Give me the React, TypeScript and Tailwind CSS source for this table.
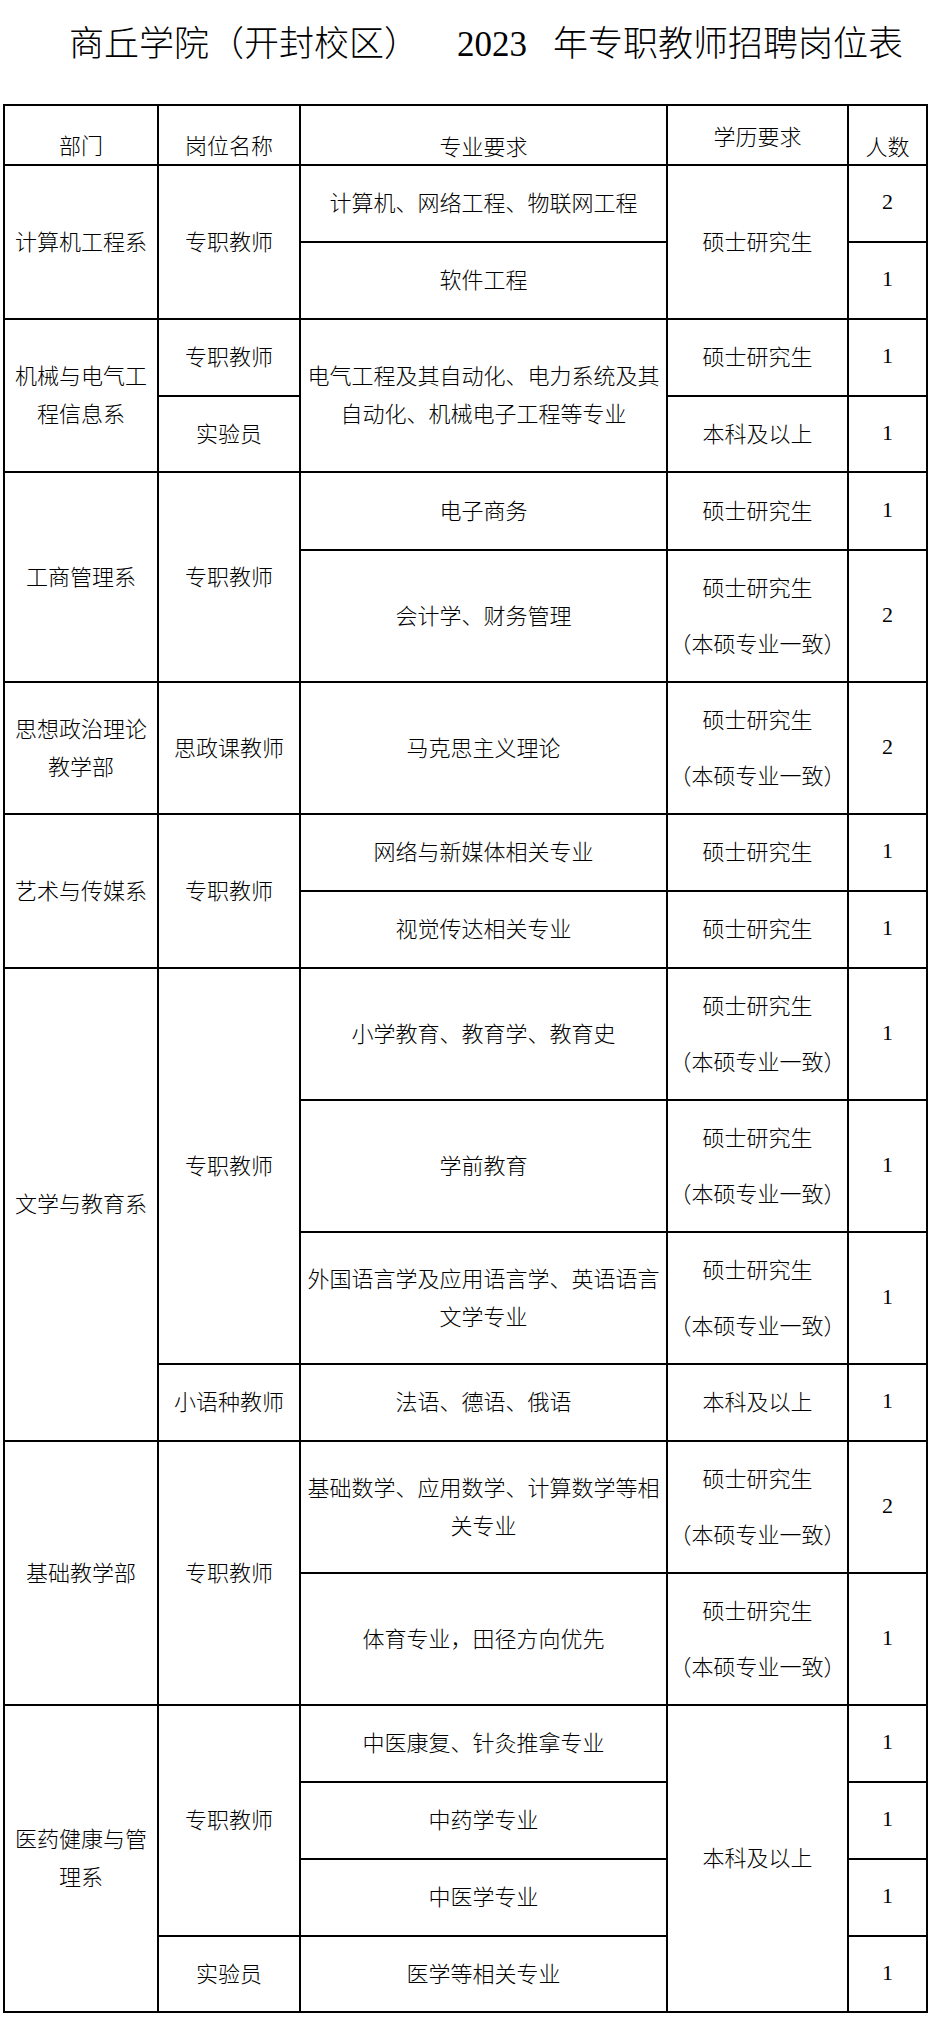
import React from "react";

type CellProps = {
  lines: string[];
  rowSpan?: number;
  pair?: boolean;
  num?: boolean;
};

function Cell({ lines, rowSpan, pair, num }: CellProps) {
  return (
    <td
      rowSpan={rowSpan}
      className={
        "border-2 border-black p-0 text-center align-middle text-[22px] " +
        (pair ? "leading-[56px] " : "leading-[38px] ") +
        (num ? "pb-[3px] font-['Liberation_Serif',serif]" : "pb-[5px]")
      }
    >
      {lines.map((l, i) => (
        <div key={i} className="whitespace-nowrap">
          {l}
        </div>
      ))}
    </td>
  );
}

const MASTER = ["硕士研究生", "（本硕专业一致）"];

export default function App() {
  return (
    <div className="w-[933px] min-h-[2033px] bg-white text-black font-['Noto_Sans_CJK_SC',sans-serif] font-light">
      {/* 标题 */}
      <div className="h-[104px] pl-[69px] pt-[23px] text-[35px] leading-[35px] whitespace-nowrap">
        <span>商丘学院（开封校区）</span>
        <span className="ml-[38px] font-['Liberation_Serif',serif] font-normal">2023</span>
        <span className="ml-[26px]">年专职教师招聘岗位表</span>
      </div>

      <table className="ml-[3px] w-[925px] table-fixed border-collapse border-2 border-black">
        <colgroup>
          <col className="w-[154px]" />
          <col className="w-[142px]" />
          <col className="w-[367px]" />
          <col className="w-[181px]" />
          <col className="w-[79px]" />
        </colgroup>
        <tbody>
          <tr className="h-[60px] text-[22px] leading-[22px]">
            <td className="border-2 border-black p-0 pt-[27px] text-center align-top">部门</td>
            <td className="border-2 border-black p-0 pt-[27px] text-center align-top">岗位名称</td>
            <td className="border-2 border-black p-0 pt-[28px] text-center align-top">专业要求</td>
            <td className="border-2 border-black p-0 pt-[18px] text-center align-top">学历要求</td>
            <td className="border-2 border-black p-0 pt-[28px] text-center align-top">人数</td>
          </tr>

          {/* 计算机工程系 */}
          <tr className="h-[77px]">
            <Cell lines={["计算机工程系"]} rowSpan={2} />
            <Cell lines={["专职教师"]} rowSpan={2} />
            <Cell lines={["计算机、网络工程、物联网工程"]} />
            <Cell lines={["硕士研究生"]} rowSpan={2} />
            <Cell lines={["2"]} num />
          </tr>
          <tr className="h-[77px]">
            <Cell lines={["软件工程"]} />
            <Cell lines={["1"]} num />
          </tr>

          {/* 机械与电气工程信息系 */}
          <tr className="h-[77px]">
            <Cell lines={["机械与电气工", "程信息系"]} rowSpan={2} />
            <Cell lines={["专职教师"]} />
            <Cell lines={["电气工程及其自动化、电力系统及其", "自动化、机械电子工程等专业"]} rowSpan={2} />
            <Cell lines={["硕士研究生"]} />
            <Cell lines={["1"]} num />
          </tr>
          <tr className="h-[76px]">
            <Cell lines={["实验员"]} />
            <Cell lines={["本科及以上"]} />
            <Cell lines={["1"]} num />
          </tr>

          {/* 工商管理系 */}
          <tr className="h-[78px]">
            <Cell lines={["工商管理系"]} rowSpan={2} />
            <Cell lines={["专职教师"]} rowSpan={2} />
            <Cell lines={["电子商务"]} />
            <Cell lines={["硕士研究生"]} />
            <Cell lines={["1"]} num />
          </tr>
          <tr className="h-[132px]">
            <Cell lines={["会计学、财务管理"]} />
            <Cell lines={MASTER} pair />
            <Cell lines={["2"]} num />
          </tr>

          {/* 思想政治理论教学部 */}
          <tr className="h-[132px]">
            <Cell lines={["思想政治理论", "教学部"]} />
            <Cell lines={["思政课教师"]} />
            <Cell lines={["马克思主义理论"]} />
            <Cell lines={MASTER} pair />
            <Cell lines={["2"]} num />
          </tr>

          {/* 艺术与传媒系 */}
          <tr className="h-[77px]">
            <Cell lines={["艺术与传媒系"]} rowSpan={2} />
            <Cell lines={["专职教师"]} rowSpan={2} />
            <Cell lines={["网络与新媒体相关专业"]} />
            <Cell lines={["硕士研究生"]} />
            <Cell lines={["1"]} num />
          </tr>
          <tr className="h-[77px]">
            <Cell lines={["视觉传达相关专业"]} />
            <Cell lines={["硕士研究生"]} />
            <Cell lines={["1"]} num />
          </tr>

          {/* 文学与教育系 */}
          <tr className="h-[132px]">
            <Cell lines={["文学与教育系"]} rowSpan={4} />
            <Cell lines={["专职教师"]} rowSpan={3} />
            <Cell lines={["小学教育、教育学、教育史"]} />
            <Cell lines={MASTER} pair />
            <Cell lines={["1"]} num />
          </tr>
          <tr className="h-[132px]">
            <Cell lines={["学前教育"]} />
            <Cell lines={MASTER} pair />
            <Cell lines={["1"]} num />
          </tr>
          <tr className="h-[132px]">
            <Cell lines={["外国语言学及应用语言学、英语语言", "文学专业"]} />
            <Cell lines={MASTER} pair />
            <Cell lines={["1"]} num />
          </tr>
          <tr className="h-[77px]">
            <Cell lines={["小语种教师"]} />
            <Cell lines={["法语、德语、俄语"]} />
            <Cell lines={["本科及以上"]} />
            <Cell lines={["1"]} num />
          </tr>

          {/* 基础教学部 */}
          <tr className="h-[132px]">
            <Cell lines={["基础教学部"]} rowSpan={2} />
            <Cell lines={["专职教师"]} rowSpan={2} />
            <Cell lines={["基础数学、应用数学、计算数学等相", "关专业"]} />
            <Cell lines={MASTER} pair />
            <Cell lines={["2"]} num />
          </tr>
          <tr className="h-[132px]">
            <Cell lines={["体育专业，田径方向优先"]} />
            <Cell lines={MASTER} pair />
            <Cell lines={["1"]} num />
          </tr>

          {/* 医药健康与管理系 */}
          <tr className="h-[77px]">
            <Cell lines={["医药健康与管", "理系"]} rowSpan={4} />
            <Cell lines={["专职教师"]} rowSpan={3} />
            <Cell lines={["中医康复、针灸推拿专业"]} />
            <Cell lines={["本科及以上"]} rowSpan={4} />
            <Cell lines={["1"]} num />
          </tr>
          <tr className="h-[77px]">
            <Cell lines={["中药学专业"]} />
            <Cell lines={["1"]} num />
          </tr>
          <tr className="h-[77px]">
            <Cell lines={["中医学专业"]} />
            <Cell lines={["1"]} num />
          </tr>
          <tr className="h-[76px]">
            <Cell lines={["实验员"]} />
            <Cell lines={["医学等相关专业"]} />
            <Cell lines={["1"]} num />
          </tr>
        </tbody>
      </table>
    </div>
  );
}
